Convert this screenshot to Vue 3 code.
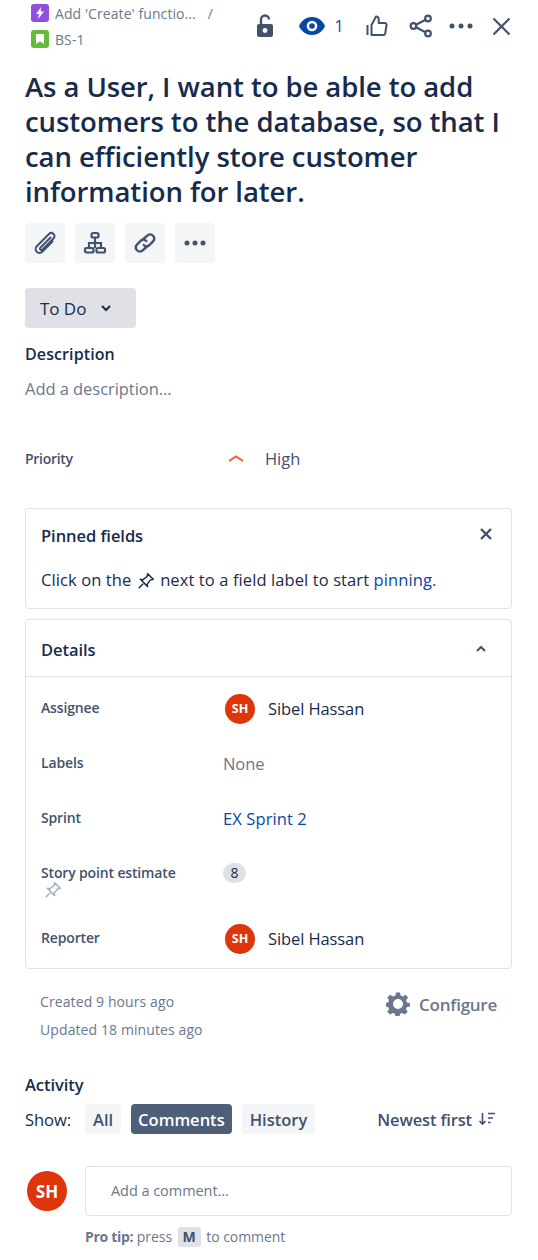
<script setup>
const actions = ['clip', 'tree', 'link', 'more']

const details = [
  { label: 'Assignee', type: 'user', value: 'Sibel Hassan' },
  { label: 'Labels', type: 'none', value: 'None' },
  { label: 'Sprint', type: 'link', value: 'EX Sprint 2' },
  { label: 'Story point estimate', type: 'badge', value: '8' },
  { label: 'Reporter', type: 'user', value: 'Sibel Hassan' }
]
</script>

<template>
  <div class="page">
    <!-- HEADER -->
    <div class="topbar">
      <div class="crumbs">
        <div class="crumb">
          <span class="crumb-icon epic">
            <svg width="10" height="12" viewBox="0 0 10 12"><path d="M6 0 1 7h3l-1 5 6-7.5H5.700z" fill="#fff" /></svg>
          </span>
          <span class="crumb-text">Add 'Create' functio...</span>
          <span class="crumb-sep">/</span>
        </div>
        <div class="crumb">
          <span class="crumb-icon story">
            <svg width="8" height="10" viewBox="0 0 8 10"><path d="M0 0h8v10L4 7.200 0 10z" fill="#fff" /></svg>
          </span>
          <span class="crumb-text">BS-1</span>
        </div>
      </div>
      <div class="top-actions">
        <svg class="lock" width="18" height="24" viewBox="0 0 18 24">
          <path d="M5 10V5.500a4 4 0 0 1 8 0" fill="none" stroke="#42526e" stroke-width="2.400" />
          <rect x="1" y="10" width="16" height="13" rx="2" fill="#42526e" />
          <circle cx="9" cy="16.500" r="2.400" fill="#fff" />
        </svg>
        <svg class="eye" width="28" height="20" viewBox="0 0 28 20">
          <path d="M14 1C7 1 2.500 6 1 10c1.500 4 6 9 13 9s11.500-5 13-9c-1.500-4-6-9-13-9z" fill="#0747a6" />
          <circle cx="14" cy="10" r="5.300" fill="#fff" />
          <circle cx="14" cy="10" r="2.800" fill="#0747a6" />
        </svg>
        <span class="watch-count">1</span>
        <svg class="thumb" width="22" height="22" viewBox="0 0 22 22" fill="none" stroke="#42526e" stroke-width="2" stroke-linejoin="round">
          <path d="M1.500 10v10" />
          <path d="M5.500 10 10 1.500c1.500 0 2.700 1 2.700 2.700V8H19c1 0 1.700 1 1.500 2l-1.300 8.500c-.2 1-1 1.500-1.800 1.500H5.500z" />
        </svg>
        <svg class="share" width="24" height="24" viewBox="0 0 24 24" fill="none" stroke="#42526e" stroke-width="2.200">
          <circle cx="4.500" cy="12" r="2.800" />
          <circle cx="19" cy="4.500" r="2.800" />
          <circle cx="19" cy="19.500" r="2.800" />
          <path d="M7 10.700 16.500 5.800M7 13.300l9.500 4.900" />
        </svg>
        <svg class="dots" width="24" height="6" viewBox="0 0 24 6" fill="#42526e">
          <circle cx="3" cy="3" r="2.500" />
          <circle cx="12" cy="3" r="2.500" />
          <circle cx="21" cy="3" r="2.500" />
        </svg>
        <svg class="close" width="19" height="19" viewBox="0 0 19 19"><path d="M1.500 1.500l16 16M17.500 1.500l-16 16" stroke="#42526e" stroke-width="2.200" /></svg>
      </div>
    </div>

    <h1 class="title">As a User, I want to be able to add customers to the database, so that I can efficiently store customer information for later.</h1>

    <div class="tools">
      <button v-for="a in actions" :key="a" class="tool">
        <svg v-if="a === 'clip'" width="24" height="24" viewBox="0 0 24 24" fill="none" stroke="#42526e" stroke-width="2" stroke-linecap="round">
          <path d="M17.500 6.500 7.500 16.500c-1.500 1.500.5 3.500 2 2L20.500 7.500c3-3-1.500-7.500-4.500-4.500L4 15c-4 4 1.500 9.500 5.500 5.500L19.500 10.500" />
        </svg>
        <svg v-else-if="a === 'tree'" width="24" height="24" viewBox="0 0 24 24" fill="none" stroke="#42526e" stroke-width="2.200">
          <rect x="8.500" y="2" width="7" height="4.500" rx="1.500" />
          <rect x="2" y="17" width="8.500" height="4.500" rx="1.500" />
          <rect x="13.500" y="17" width="8.500" height="4.500" rx="1.500" />
          <path d="M12 6.500v10.500M6 17v-5h12v5" />
        </svg>
        <svg v-else-if="a === 'link'" width="24" height="24" viewBox="0 0 24 24" fill="none" stroke="#42526e" stroke-width="2.400" stroke-linecap="round">
          <path d="M10.500 8 14 4.800c2-1.800 4.500-1.600 6 0s1.600 4-.2 5.800L16.500 14c-2 1.800-4.300 1.500-5.700 0" />
          <path d="M13.500 16 10 19.200c-2 1.800-4.500 1.600-6 0s-1.600-4 .2-5.800L7.500 10c2-1.800 4.300-1.500 5.700 0" />
        </svg>
        <svg v-else width="24" height="6" viewBox="0 0 24 6" fill="#42526e">
          <circle cx="4" cy="3" r="2.500" />
          <circle cx="12" cy="3" r="2.500" />
          <circle cx="20" cy="3" r="2.500" />
        </svg>
      </button>
    </div>

    <button class="status">
      <span>To Do</span>
      <svg width="10" height="7" viewBox="0 0 10 7"><path d="M1 1l4 4 4-4" fill="none" stroke="#172b4d" stroke-width="2" /></svg>
    </button>

    <div class="desc-label">Description</div>
    <div class="desc-input">Add a description...</div>

    <div class="priority">
      <span class="priority-label">Priority</span>
      <svg class="priority-icon" width="16" height="7" viewBox="0 0 16 7"><path d="M1 6l7-4.500L15 6" fill="none" stroke="#ff5630" stroke-width="2" /></svg>
      <span class="priority-value">High</span>
    </div>

    <!-- PINNED -->
    <div class="card pinned">
      <div class="pinned-head">
        <span class="card-title">Pinned fields</span>
        <svg width="12" height="12" viewBox="0 0 12 12"><path d="M1 1l10 10M11 1 1 11" stroke="#42526e" stroke-width="2.400" /></svg>
      </div>
      <div class="pinned-text">
        Click on the
        <svg class="pin" width="18" height="18" viewBox="0 0 16 16" fill="none" stroke="#172b4d" stroke-width="1.300" stroke-linejoin="round">
          <path d="M9.500 1.500 14.500 6.500 12 7 9 11 9.500 13 3 6.500 5 7 9 4z" />
          <path d="M5.500 10.500 1.500 14.500" />
        </svg>
        next to a field label to start <span class="pinning">pinning.</span>
      </div>
    </div>

    <!-- DETAILS -->
    <div class="card details">
      <div class="details-head">
        <span class="card-title">Details</span>
        <svg width="10" height="7" viewBox="0 0 10 7"><path d="M1 6l4-4 4 4" fill="none" stroke="#42526e" stroke-width="2" /></svg>
      </div>
      <div class="details-body">
        <div v-for="d in details" :key="d.label" class="row" :class="'row-' + d.type">
          <div class="row-label">
            <div>{{ d.label }}</div>
            <svg v-if="d.type === 'badge'" class="pin-muted" width="18" height="18" viewBox="0 0 16 16" fill="none" stroke="#a5adba" stroke-width="1.300" stroke-linejoin="round">
              <path d="M9.500 1.500 14.500 6.500 12 7 9 11 9.500 13 3 6.500 5 7 9 4z" />
              <path d="M5.500 10.500 1.500 14.500" />
            </svg>
          </div>
          <div v-if="d.type === 'user'" class="user">
            <span class="avatar">SH</span>
            <span class="user-name">{{ d.value }}</span>
          </div>
          <div v-else-if="d.type === 'none'" class="none">{{ d.value }}</div>
          <div v-else-if="d.type === 'link'" class="sprint">{{ d.value }}</div>
          <div v-else class="badge">{{ d.value }}</div>
        </div>
      </div>
    </div>

    <!-- META -->
    <div class="meta">
      <div class="dates">
        <div>Created 9 hours ago</div>
        <div>Updated 18 minutes ago</div>
      </div>
      <div class="configure">
        <svg width="24" height="24" viewBox="0 0 24 24">
          <path fill="#6b778c" fill-rule="evenodd" d="M10 1h4l.6 3 2.200 1 2.600-1.700 2.800 2.800L20 8.700l.9 2.200 3 .6v3.500l-3 .5-.9 2.200 1.700 2.600-2.800 2.800-2.600-1.700-2.200.9-.6 2.900h-4l-.6-2.900-2.200-.9-2.600 1.700-2.800-2.800 1.700-2.600-.9-2.200-3-.5v-3.500l3-.6.9-2.200-1.700-2.600 2.800-2.800L7.200 5l2.200-1zM12 7.500a5 5 0 1 0 0 10 5 5 0 0 0 0-10z" transform="translate(0 -.5)" />
        </svg>
        <span>Configure</span>
      </div>
    </div>

    <!-- ACTIVITY -->
    <div class="activity-title">Activity</div>
    <div class="filters">
      <span class="show">Show:</span>
      <button class="filter">All</button>
      <button class="filter active">Comments</button>
      <button class="filter">History</button>
      <div class="sort">
        <span>Newest first</span>
        <svg width="18" height="14" viewBox="0 0 18 14" fill="none" stroke="#42526e" stroke-width="1.600">
          <path d="M4.500 1v11M1.500 9l3 3 3-3M10 1.500h7M10 6h5M10 10.500h2.500" />
        </svg>
      </div>
    </div>

    <div class="comment">
      <span class="avatar big">SH</span>
      <div class="comment-main">
        <div class="comment-input">Add a comment...</div>
        <div class="tip"><b>Pro tip:</b> press <span class="key">M</span> to comment</div>
      </div>
    </div>
  </div>
</template>

<style>
html, body {
  margin: 0;
  background: #fff;
}
</style>

<style scoped>
.page {
  width: 538px;
  height: 1260px;
  box-sizing: border-box;
  padding: 0 26px 0 25px;
  overflow: hidden;
  font-family: "Open Sans", "Noto Sans", sans-serif;
  color: #172b4d;
  font-size: 16px;
  letter-spacing: -0.05px;
}

button {
  border: 0;
  font: inherit;
  letter-spacing: inherit;
  padding: 0;
}

.topbar {
  display: flex;
  justify-content: space-between;
  height: 69px;
}

.crumbs {
  padding-left: 6px;
}

.crumb {
  display: flex;
  align-items: center;
  height: 26px;
  font-size: 14px;
  color: #6b778c;
  letter-spacing: 0.08px;
}

.crumb-icon {
  width: 18px;
  height: 18px;
  border-radius: 3px;
  display: flex;
  align-items: center;
  justify-content: center;
  margin-right: 6px;
}

.epic { background: #904ee2; }
.story { background: #63ba3c; }

.crumb-sep {
  margin-left: 12px;
}

.top-actions {
  display: flex;
  align-items: center;
  height: 52px;
  margin-right: 1.5px;
}

.lock { margin-right: 24px; }
.eye { margin-right: 8px; }

.watch-count {
  font-size: 16px;
  color: #0747a6;
  margin-right: 22px;
}

.thumb { margin-right: 21px; }
.share { margin-right: 16px; }
.dots { margin-right: 19px; }

.title {
  margin: 0;
  font-size: 27.5px;
  line-height: 35px;
  font-weight: 600;
  letter-spacing: -0.08px;
}

.tools {
  display: flex;
  gap: 10px;
  margin-top: 14px;
}

.tool {
  width: 40px;
  height: 40px;
  border-radius: 4px;
  background: #f4f5f7;
  display: flex;
  align-items: center;
  justify-content: center;
}

.status {
  display: flex;
  align-items: center;
  gap: 15px;
  width: 111px;
  height: 40px;
  margin-top: 25px;
  padding-left: 15px;
  box-sizing: border-box;
  border-radius: 4px;
  background: #dfe1e6;
  color: #172b4d;
  font-size: 17px;
}

.desc-label {
  margin-top: 14px;
  height: 24px;
  line-height: 24px;
  font-weight: 600;
  font-size: 16px;
  letter-spacing: 0.1px;
}

.desc-input {
  margin-top: 11px;
  height: 24px;
  line-height: 24px;
  font-size: 16.5px;
  color: #6b778c;
}

.priority {
  display: flex;
  align-items: center;
  height: 24px;
  margin-top: 45px;
}

.priority-label {
  width: 203px;
  font-size: 14px;
  font-weight: 600;
  color: #42526e;
  letter-spacing: -0.3px;
}

.priority-icon {
  margin-right: 21px;
}

.priority-value {
  font-size: 16.5px;
  color: #42526e;
}

.card {
  border: 1px solid #dfe1e6;
  border-radius: 4px;
}

.card-title {
  font-weight: 600;
  font-size: 16.5px;
  position: relative;
  top: 1px;
}

.pinned {
  margin-top: 38px;
  height: 101px;
  box-sizing: border-box;
  padding: 0 15px;
}

.pinned-head {
  display: flex;
  align-items: center;
  justify-content: space-between;
  height: 50px;
  padding-right: 4px;
}

.pinned-text {
  margin-top: 9px;
  height: 24px;
  line-height: 24px;
  font-size: 16.5px;
  white-space: nowrap;
  letter-spacing: 0.1px;
}

.pin {
  vertical-align: -4px;
  margin: 0 1px;
}

.pinning {
  color: #0747a6;
}

.details {
  margin-top: 10px;
  height: 350px;
  box-sizing: border-box;
}

.details-head {
  display: flex;
  align-items: center;
  justify-content: space-between;
  height: 56px;
  padding: 0 25px 0 15px;
  border-bottom: 1px solid #dfe1e6;
}

.details-body {
  padding: 4px 15px 0;
}

.row {
  display: flex;
  height: 55px;
}

.row-badge {
  height: 65px;
}

.row-label {
  width: 182px;
  padding-top: 17px;
  font-size: 14px;
  line-height: 20px;
  font-weight: 600;
  color: #42526e;
  letter-spacing: -0.15px;
}

.pin-muted {
  display: block;
  margin: -2px 0 0 3px;
}

.user {
  display: flex;
  align-items: center;
  height: 55px;
  margin-left: 2px;
}

.avatar {
  width: 30px;
  height: 30px;
  border-radius: 50%;
  background: #de350b;
  color: #fff;
  font-size: 12.5px;
  font-weight: 700;
  letter-spacing: 0;
  display: flex;
  align-items: center;
  justify-content: center;
}

.user-name {
  margin-left: 13px;
  font-size: 16.5px;
  letter-spacing: -0.1px;
}

.none {
  line-height: 55px;
  font-size: 16.5px;
  color: #6b778c;
}

.sprint {
  line-height: 55px;
  font-size: 16.5px;
  color: #0747a6;
  letter-spacing: 0.1px;
}

.badge {
  width: 23px;
  height: 20px;
  margin-top: 17px;
  border-radius: 10px;
  background: #dfe1e6;
  text-align: center;
  line-height: 20px;
  font-size: 14px;
}

.meta {
  display: flex;
  justify-content: space-between;
  margin-top: 19px;
  padding: 0 15px 0 15px;
  color: #6b778c;
}

.dates {
  font-size: 14px;
  line-height: 28px;
  letter-spacing: 0.1px;
}

.configure {
  display: flex;
  align-items: center;
  gap: 9px;
  height: 32px;
  font-size: 17px;
  font-weight: 600;
  letter-spacing: -0.25px;
}

.activity-title {
  margin-top: 29px;
  height: 24px;
  line-height: 24px;
  font-size: 16.5px;
  font-weight: 600;
}

.filters {
  display: flex;
  align-items: center;
  height: 30px;
  margin-top: 7px;
}

.show {
  width: 60px;
  font-size: 16.5px;
}

.filter {
  height: 30px;
  margin-right: 10px;
  padding: 0 8px;
  border-radius: 4px;
  background: #f4f5f7;
  color: #42526e;
  font-size: 16.5px;
  font-weight: 600;
  letter-spacing: 0;
}

.filter.active {
  padding: 0 7px;
  background: #505f79;
  color: #fff;
}

.sort {
  display: flex;
  align-items: center;
  gap: 6px;
  margin-left: auto;
  margin-right: 16px;
  font-size: 16.5px;
  font-weight: 600;
  color: #42526e;
  letter-spacing: -0.15px;
}

.comment {
  display: flex;
  margin-top: 32px;
}

.avatar.big {
  width: 40px;
  height: 40px;
  flex: none;
  margin: 5px 0 0 2px;
  font-size: 17px;
}

.comment-main {
  flex: 1;
  margin-left: 18px;
}

.comment-input {
  height: 50px;
  box-sizing: border-box;
  border: 1px solid #dfe1e6;
  border-radius: 4px;
  padding-left: 25px;
  line-height: 48px;
  font-size: 14.5px;
  color: #6b778c;
  letter-spacing: -0.05px;
}

.tip {
  margin-top: 10px;
  height: 22px;
  line-height: 22px;
  font-size: 14px;
  color: #6b778c;
  letter-spacing: -0.05px;
}

.tip b {
  font-weight: 700;
  letter-spacing: -0.3px;
}

.key {
  display: inline-block;
  width: 23px;
  height: 20px;
  line-height: 20px;
  margin: 0 2px;
  border-radius: 3px;
  background: #dfe1e6;
  text-align: center;
  font-weight: 700;
  color: #42526e;
}
</style>
